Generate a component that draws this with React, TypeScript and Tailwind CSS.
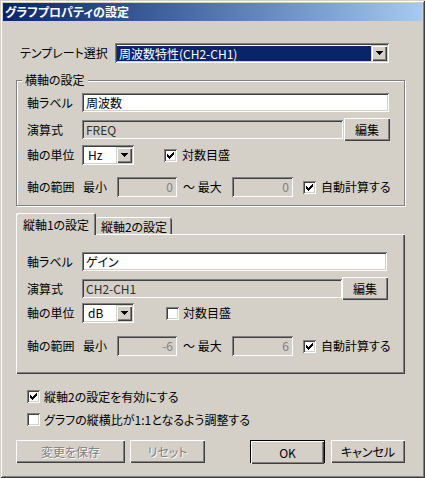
import React from 'react';

const raised = 'shadow-[inset_1px_1px_#ffffff,inset_-1px_-1px_#404040,inset_-2px_-2px_#808080]';
const sunken = 'shadow-[inset_1px_1px_#808080,inset_-1px_-1px_#ffffff,inset_2px_2px_#404040,inset_-2px_-2px_#d4d0c8]';
const arrowBtn = 'shadow-[inset_1px_1px_#d4d0c8,inset_2px_2px_#ffffff,inset_-1px_-1px_#404040,inset_-2px_-2px_#808080]';

const Arrow = () => (
  <svg width="7" height="4" shapeRendering="crispEdges">
    <path d="M0 0h7v1h-7z M1 1h5v1h-5z M2 2h3v1h-3z M3 3h1v1h-1z" fill="#000" />
  </svg>
);

const Check = () => (
  <svg width="7" height="7" shapeRendering="crispEdges">
    <path
      d="M6 0h1v1h-1z M5 1h2v1h-2z M0 2h1v1h-1z M4 2h3v1h-3z M0 3h2v1h-2z M3 3h3v1h-3z M0 4h5v1h-5z M1 5h3v1h-3z M2 6h1v1h-1z"
      fill="#000"
    />
  </svg>
);

const Checkbox = ({ checked }: { checked: boolean }) => (
  <span className={`flex items-center justify-center w-[13px] h-[13px] shrink-0 bg-white ${sunken}`}>
    {checked && <Check />}
  </span>
);

const SmallCombo = ({ value }: { value: string }) => (
  <div className={`flex items-center shrink-0 w-[52px] h-[20px] p-[2px] bg-white ${sunken}`}>
    <span className="flex-1 pl-[4px]">{value}</span>
    <span className={`flex items-center justify-center w-[16px] h-[16px] bg-[#d4d0c8] ${arrowBtn}`}>
      <Arrow />
    </span>
  </div>
);

const Button = ({ label, className }: { label: string; className: string }) => (
  <button className={`flex items-center justify-center shrink-0 h-[23px] bg-[#d4d0c8] ${raised} ${className}`}>
    {label}
  </button>
);

interface AxisProps {
  label: string;
  expr: string;
  unit: string;
  log: boolean;
  min: string;
  max: string;
  boxed: boolean;
}

const AxisFields: React.FC<AxisProps> = ({ label, expr, unit, log, min, max, boxed }) => (
  <>
    <div className="flex items-center h-[19px]">
      <span className="w-[55px] shrink-0">軸ラベル</span>
      <div className={`flex-1 h-[19px] mr-[1px] flex items-center pl-[4px] bg-white ${sunken}`}>{label}</div>
    </div>
    <div className="flex items-center h-[23px] mt-[6px]">
      <span className="w-[55px] shrink-0">演算式</span>
      <div className={`${boxed ? 'w-[261px] mr-[1px]' : 'w-[260px]'} shrink-0 h-[19px] flex items-center pl-[4px] text-[#303030] bg-[#d4d0c8] ${sunken}`}>
        {expr}
      </div>
      <Button label="編集" className="w-[46px]" />
    </div>
    <div className={`flex items-center h-[20px] ${boxed ? 'mt-[4px]' : 'mt-[3px]'}`}>
      <span className="w-[55px] shrink-0">軸の単位</span>
      <SmallCombo value={unit} />
      <span className={boxed ? 'ml-[30px]' : 'ml-[32px]'}>
        <Checkbox checked={log} />
      </span>
      <span className={boxed ? 'ml-[5px]' : 'ml-[4px]'}>対数目盛</span>
    </div>
    <div className={`flex items-center h-[20px] ${boxed ? 'mt-[12px]' : 'mt-[13px]'}`}>
      <span className="w-[55px] shrink-0">軸の範囲</span>
      <span className="w-[35px] shrink-0 pl-[1px]">最小</span>
      <div className={`w-[60px] shrink-0 h-[20px] flex items-center justify-end pr-[4px] text-[#808080] bg-[#d4d0c8] ${sunken}`}>{min}</div>
      <span className="w-[55px] shrink-0 pl-[6px]">～ 最大</span>
      <div className={`w-[61px] shrink-0 h-[20px] flex items-center justify-end pr-[4px] text-[#808080] bg-[#d4d0c8] ${sunken}`}>{max}</div>
      <span className="ml-[10px] shrink-0">
        <Checkbox checked />
      </span>
      <span className="ml-[5px] shrink-0">自動計算する</span>
    </div>
  </>
);

export default function App() {
  return (
    <div className="w-[425px] h-[478px] p-[3px] flex flex-col whitespace-nowrap bg-[#d4d0c8] text-black text-[12px] leading-[14px] font-['Noto_Sans_CJK_JP','Liberation_Sans',sans-serif] [font-feature-settings:'palt'] shadow-[inset_1px_1px_#d4d0c8,inset_-1px_-1px_#404040,inset_2px_2px_#ffffff,inset_-2px_-2px_#808080]">
      <div className="h-[18px] shrink-0 flex items-center pl-[2px] font-bold text-white bg-linear-to-r from-[#0a246a] to-[#a6caf0]">
        グラフプロパティの設定
      </div>

      <div className="flex flex-col pl-[13px] pr-[17px]">
        <div className="flex items-center h-[20px] mt-[22px]">
          <span className="ml-[4px] w-[95px] shrink-0">テンプレート選択</span>
          <div className={`flex items-center w-[274px] h-[20px] p-[2px] bg-white ${sunken}`}>
            <span className="flex-1 h-[15px] mt-[1px] flex items-center pl-[2px] bg-[#0a246a] text-white">
              周波数特性(CH2-CH1)
            </span>
            <span className={`flex items-center justify-center w-[16px] h-[16px] bg-[#d4d0c8] ${arrowBtn}`}>
              <Arrow />
            </span>
          </div>
        </div>

        <div className="relative mt-[17px] border border-[#808080] shadow-[inset_1px_1px_#ffffff,1px_1px_#ffffff] pl-[10px] pr-[14px] pt-[12px] pb-[8px]">
          <span className="absolute left-[5px] -top-[8px] px-[3px] bg-[#d4d0c8]">横軸の設定</span>
          <AxisFields label="周波数" expr="FREQ" unit="Hz" log min="0" max="0" boxed />
        </div>

        <div className="flex items-end h-[21px] mt-[7px]">
          <div className="relative z-10 -mb-[1px] w-[80px] h-[22px] flex items-center justify-center pt-[2px] bg-[#d4d0c8] rounded-t-[2px] shadow-[inset_1px_1px_#ffffff,inset_-1px_0_#404040,inset_-2px_0_#808080]">
            縦軸1の設定
          </div>
          <div className="w-[76px] h-[17px] flex items-center justify-center pt-[2px] bg-[#d4d0c8] rounded-t-[2px] shadow-[inset_0_1px_#ffffff,inset_-1px_0_#404040,inset_-2px_0_#808080]">
            縦軸2の設定
          </div>
        </div>
        <div className={`flex flex-col pl-[11px] pr-[17px] pt-[18px] pb-[18px] ${raised}`}>
          <AxisFields label="ゲイン" expr="CH2-CH1" unit="dB" log={false} min="-6" max="6" boxed={false} />
        </div>

        <div className="flex items-center h-[13px] mt-[16px] ml-[11px]">
          <Checkbox checked />
          <span className="ml-[4px]">縦軸2の設定を有効にする</span>
        </div>
        <div className="flex items-center h-[13px] mt-[10px] ml-[11px]">
          <Checkbox checked={false} />
          <span className="ml-[4px]">グラフの縦横比が1:1となるよう調整する</span>
        </div>

        <div className="flex items-center mt-[14px]">
          <Button label="変更を保存" className="w-[109px] text-[#808080] [text-shadow:1px_1px_#ffffff]" />
          <Button label="リセット" className="ml-[5px] w-[75px] text-[#808080] [text-shadow:1px_1px_#ffffff]" />
          <div className="ml-[45px] w-[75px] h-[23px] shrink-0 border border-black">
            <Button label="OK" className="w-full h-[21px]" />
          </div>
          <Button label="キャンセル" className="ml-[6px] w-[74px]" />
        </div>
      </div>
    </div>
  );
}
